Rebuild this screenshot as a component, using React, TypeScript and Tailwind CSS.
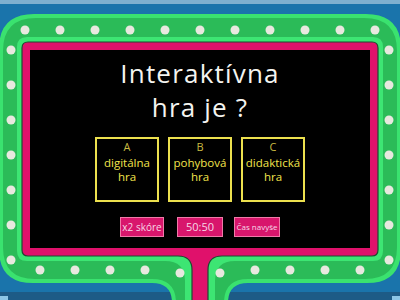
import React from "react";

const topDots = [25, 60, 95, 130, 165, 200, 235, 270, 305, 340, 375];
const sideDots = [50, 85, 120, 155, 190, 225, 260];
const bottomDots: [number, number][] = [
  [40, 270], [75, 270], [110, 270], [145, 270], [180, 273],
  [220, 273], [255, 270], [290, 270], [325, 270], [360, 270],
];

const answers = [
  { key: "A", text: ["digitálna", "hra"] },
  { key: "B", text: ["pohybová", "hra"] },
  { key: "C", text: ["didaktická", "hra"] },
];

function Frame() {
  return (
    <svg className="absolute inset-0" width="400" height="300" viewBox="0 0 400 300">
      <rect width="400" height="300" fill="#1a74ab" />
      <rect width="400" height="4" fill="#7eb0cf" />
      <rect x="0" y="292" width="400" height="8" fill="#1d5b86" />
      <rect x="0" y="296" width="8" height="4" fill="#8cc6e6" />
      <rect x="392" y="296" width="8" height="4" fill="#8cc6e6" />
      {/* outer bright green */}
      <path
        d="M34,14 H366 Q401,14 401,49 V249 Q401,283 367,283 H248 Q228,283 228,303 H172 Q172,283 152,283 H33 Q-1,283 -1,249 V49 Q-1,14 34,14 Z"
        fill="#3ae26f"
      />
      {/* dark green band */}
      <path
        d="M36,18 H364 Q397,18 397,51 V247 Q397,279 365,279 H248 Q224,279 224,303 H176 Q176,279 152,279 H35 Q3,279 3,247 V51 Q3,18 36,18 Z"
        fill="#2bbb58"
      />
      {/* inner bright green ring */}
      <path
        d="M27,37 H373 Q383,37 383,47 V251 Q383,261 373,261 H235 Q215,261 215,281 V303 H185 V281 Q185,261 165,261 H27 Q17,261 17,251 V47 Q17,37 27,37 Z"
        fill="#3de573"
      />
      {/* pink border */}
      <path
        d="M28,42 H372 Q378,42 378,48 V250 Q378,256 372,256 H222 Q208,256 208,270 V303 H192 V270 Q192,256 178,256 H28 Q22,256 22,250 V48 Q22,42 28,42 Z"
        fill="#e0116b"
        stroke="#1f4a30"
        strokeWidth="1.2"
      />
      {topDots.map((x) => (
        <circle key={"t" + x} cx={x} cy={30} r={4.5} fill="#e8e8df" />
      ))}
      {sideDots.map((y) => (
        <circle key={"l" + y} cx={11} cy={y} r={4.5} fill="#e8e8df" />
      ))}
      {sideDots.map((y) => (
        <circle key={"r" + y} cx={389} cy={y} r={4.5} fill="#e8e8df" />
      ))}
      {bottomDots.map(([x, y]) => (
        <circle key={"b" + x} cx={x} cy={y} r={4.5} fill="#e8e8df" />
      ))}
    </svg>
  );
}

export default function App() {
  return (
    <div
      className="relative w-[400px] h-[300px] overflow-hidden"
      style={{ fontFamily: '"Open Sans", "DejaVu Sans", sans-serif' }}
    >
      <Frame />
      <div className="relative ml-[30px] mt-[50px] w-[340px] h-[198px] bg-black flex flex-col items-center pt-[6px]">
        <div className="text-[#f4f4f0] text-[26px] leading-[34px] tracking-[1.2px] text-center">
          <div>Interaktívna</div>
          <div>hra je ?</div>
        </div>
        <div className="flex gap-[9px] mt-[13px]">
          {answers.map((a) => (
            <div
              key={a.key}
              className="w-[64px] h-[65px] border-2 border-[#ece04e] flex flex-col items-center pt-[1px]"
            >
              <div className="text-[11px] leading-[14px] text-[#c9bb42]">{a.key}</div>
              <div className="text-[11.5px] leading-[14px] text-[#f3e44c] text-center mt-[2px]">
                {a.text.map((t) => (
                  <div key={t}>{t}</div>
                ))}
              </div>
            </div>
          ))}
        </div>
        <div className="flex items-center mt-[15px]">
          <div className="w-[44px] h-[20px] bg-[#d8166c] border border-[#f07aa8] text-[#f6d8e6] text-[10px] flex items-center justify-center whitespace-nowrap">
            x2 skóre
          </div>
          <div className="w-[46px] h-[20px] ml-[13px] bg-[#d8166c] border border-[#f07aa8] text-[#f6d8e6] text-[11px] flex items-center justify-center">
            50:50
          </div>
          <div className="w-[46px] h-[20px] ml-[11px] bg-[#d8166c] border border-[#f07aa8] text-[#f6d8e6] text-[8px] flex items-center justify-center whitespace-nowrap">
            Čas navyše
          </div>
        </div>
      </div>
    </div>
  );
}
